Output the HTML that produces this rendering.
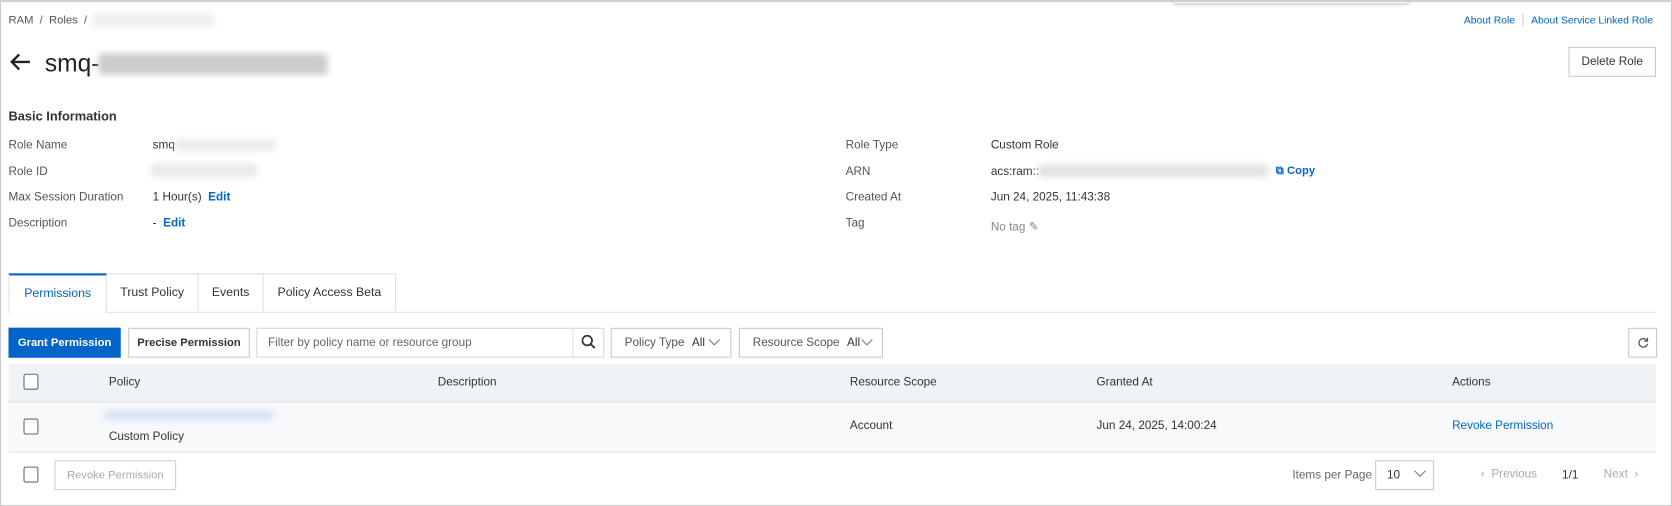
<!DOCTYPE html>
<html><head><style>
*{box-sizing:border-box;margin:0;padding:0}
html,body{width:1672px;height:506px;overflow:hidden;background:#fff}
#w{position:absolute;left:0;top:0;width:1566px;height:474px;transform:scale(1.0677);transform-origin:0 0;font-family:"Liberation Sans",sans-serif;font-size:11px;color:#333}
.a{position:absolute;white-space:nowrap}
.frame{position:absolute;left:0;top:0;width:1566px;height:474px;border:1px solid #c8c8c8;border-top:2px solid #d0d0d0}
.blur{position:absolute;background:#e6e6e6;filter:blur(3px);border-radius:4px}
.lbl{color:#555}
.blue{color:#0064c8}
.btn{position:absolute;border:1px solid #c8c8c8;background:#fff;display:flex;align-items:center;justify-content:center;color:#333;white-space:nowrap}
.cb{position:absolute;width:14px;height:15px;border:1.5px solid #666;border-radius:2px;background:#fff}
.sel{position:absolute;height:28px;border:1px solid #c8c8c8;display:flex;align-items:center;padding:0 9px 0 12px;color:#555;white-space:nowrap;font-size:11px}
.sel b{font-weight:normal;margin-left:7px;color:#333}
.sel svg{margin-left:auto;flex:none}
.tabs{position:absolute;left:8px;top:256px;display:flex;height:37px}
.tab{border:1px solid #e0e0e0;border-left:none;border-bottom:none;padding:11px 0 0;text-align:center;font-size:11.5px;white-space:nowrap}
</style></head><body><div id="w">
<div class="frame"></div>
<div class="a" style="left:1098px;top:0;width:222px;height:3px;box-shadow:0 1px 3px rgba(0,0,0,.3);border-radius:0 0 4px 4px"></div>
<div class="a lbl" style="left:8px;top:13px;font-size:10.5px">RAM &nbsp;/&nbsp; Roles &nbsp;/</div>
<div class="blur" style="left:86px;top:13px;width:115px;height:12px;background:#eee"></div>
<div class="a blue" style="left:1371px;top:14px;font-size:9.7px">About Role</div>
<div class="a" style="left:1426px;top:13px;width:1px;height:12px;background:#ccc"></div>
<div class="a blue" style="left:1434px;top:14px;font-size:9.7px">About Service Linked Role</div>
<svg class="a" style="left:8px;top:49px" width="22" height="18" viewBox="0 0 22 18"><path d="M20 9H3M10 2L3 9l7 7" stroke="#222" stroke-width="2.2" fill="none"/></svg>
<div class="a" style="left:42px;top:46px;font-size:23px;color:#222">smq-</div>
<div class="blur" style="left:92px;top:50px;width:215px;height:20px;background:#ccc"></div>
<div class="btn" style="left:1469px;top:44px;width:82px;height:28px">Delete Role</div>
<div class="a" style="left:8px;top:102px;font-size:12px;font-weight:bold;color:#333">Basic Information</div>
<div class="a lbl" style="left:8px;top:130px">Role Name</div>
<div class="a" style="left:143px;top:130px">smq</div>
<div class="blur" style="left:164px;top:130px;width:94px;height:12px;background:#ececec"></div>
<div class="a lbl" style="left:8px;top:155px">Role ID</div>
<div class="blur" style="left:141px;top:153px;width:100px;height:13px;background:#eaeaea"></div>
<div class="a lbl" style="left:8px;top:179px">Max Session Duration</div>
<div class="a" style="left:143px;top:179px">1 Hour(s) &nbsp;<b class="blue">Edit</b></div>
<div class="a lbl" style="left:8px;top:203px">Description</div>
<div class="a" style="left:143px;top:203px">- &nbsp;<b class="blue">Edit</b></div>
<div class="a lbl" style="left:792px;top:130px">Role Type</div>
<div class="a" style="left:928px;top:130px">Custom Role</div>
<div class="a lbl" style="left:792px;top:155px">ARN</div>
<div class="a" style="left:928px;top:155px">acs:ram::</div>
<div class="blur" style="left:972px;top:154px;width:216px;height:12px;background:#e2e2e2"></div>
<div class="a blue" style="left:1195px;top:154px;font-weight:bold;font-size:10.5px">⧉ Copy</div>
<div class="a lbl" style="left:792px;top:179px">Created At</div>
<div class="a" style="left:928px;top:179px">Jun 24, 2025, 11:43:38</div>
<div class="a lbl" style="left:792px;top:203px">Tag</div>
<div class="a" style="left:928px;top:206px;color:#888">No tag ✎</div>
<!-- tabs -->
<div class="a" style="left:8px;top:292px;width:1543px;height:1px;background:#e0e0e0"></div>
<div class="tabs">
<div class="tab" style="border-left:1px solid #e0e0e0;border-top:2px solid #0064c8;color:#0064c8;background:#fff;height:37px;width:92px">Permissions</div>
<div class="tab" style="width:86px">Trust Policy</div>
<div class="tab" style="width:61px">Events</div>
<div class="tab" style="width:124px">Policy Access Beta</div>
</div>
<!-- toolbar -->
<div class="btn" style="left:8px;top:307px;width:105px;height:28px;background:#0064c8;border-color:#0064c8;color:#fff;font-weight:bold;font-size:10.5px">Grant Permission</div>
<div class="btn" style="left:120px;top:307px;width:114px;height:28px;font-weight:bold;font-size:10.5px">Precise Permission</div>
<div class="a" style="left:240px;top:307px;width:326px;height:28px;border:1px solid #d8d8d8"></div>
<div class="a" style="left:251px;top:315px;color:#666">Filter by policy name or resource group</div>
<div class="a" style="left:536px;top:308px;width:1px;height:26px;background:#e0e0e0"></div>
<svg class="a" style="left:544px;top:313px" width="14" height="14" viewBox="0 0 14 14"><circle cx="6" cy="6" r="4.5" stroke="#333" stroke-width="1.6" fill="none"/><path d="M9.3 9.3L13 13" stroke="#333" stroke-width="1.8"/></svg>
<div class="sel" style="left:572px;top:307px;width:113px">Policy Type<b>All</b><svg width="12" height="8"><path d="M1 1l5 5 5-5" stroke="#777" fill="none"/></svg></div>
<div class="sel" style="left:692px;top:307px;width:135px">Resource Scope<b>All</b><svg width="12" height="8"><path d="M1 1l5 5 5-5" stroke="#777" fill="none"/></svg></div>
<div class="btn" style="left:1525px;top:307px;width:27px;height:28px">
<svg width="12" height="12" viewBox="0 0 12 12"><path d="M9.5 4A4 4 0 1 0 10 7" stroke="#555" stroke-width="1.2" fill="none"/><path d="M10 1.5V4.5H7" stroke="#555" stroke-width="1.2" fill="none"/></svg></div>
<!-- table -->
<div class="a" style="left:8px;top:341px;width:1543px;height:36px;background:#eff2f6;border-bottom:1px solid #dde1e6"></div>
<div class="cb" style="left:22px;top:350px"></div>
<div class="a" style="left:102px;top:352px">Policy</div>
<div class="a" style="left:410px;top:352px">Description</div>
<div class="a" style="left:796px;top:352px">Resource Scope</div>
<div class="a" style="left:1027px;top:352px">Granted At</div>
<div class="a" style="left:1360px;top:352px">Actions</div>
<div class="a" style="left:8px;top:377px;width:1543px;height:47px;background:#f7f9fb;border-bottom:1px solid #dde1e6"></div>
<div class="cb" style="left:22px;top:392px"></div>
<div class="blur" style="left:98px;top:384px;width:158px;height:10px;background:#d6e3f5"></div>
<div class="a" style="left:102px;top:403px">Custom Policy</div>
<div class="a" style="left:796px;top:393px">Account</div>
<div class="a" style="left:1027px;top:393px">Jun 24, 2025, 14:00:24</div>
<div class="a blue" style="left:1360px;top:393px">Revoke Permission</div>
<!-- footer -->
<div class="cb" style="left:22px;top:437px"></div>
<div class="btn" style="left:51px;top:431px;width:114px;height:28px;color:#aaa;border-color:#d0d0d0;font-size:10.5px">Revoke Permission</div>
<div class="a" style="left:1200px;top:439px;color:#666;width:85px;text-align:right;font-size:11px">Items per Page</div>
<div class="a" style="left:1288px;top:431px;width:55px;height:28px;border:1px solid #c8c8c8"></div>
<div class="a" style="left:1299px;top:439px">10</div>
<svg class="a" style="left:1324px;top:440px" width="12" height="8"><path d="M1 1l5 5 5-5" stroke="#777" fill="none"/></svg>
<div class="a" style="left:1387px;top:438px;color:#aaa;font-size:11px">‹ &nbsp;Previous</div>
<div class="a" style="left:1463px;top:439px;font-size:11px">1/1</div>
<div class="a" style="left:1502px;top:438px;color:#aaa;font-size:11px">Next &nbsp;›</div>
</div></body></html>
